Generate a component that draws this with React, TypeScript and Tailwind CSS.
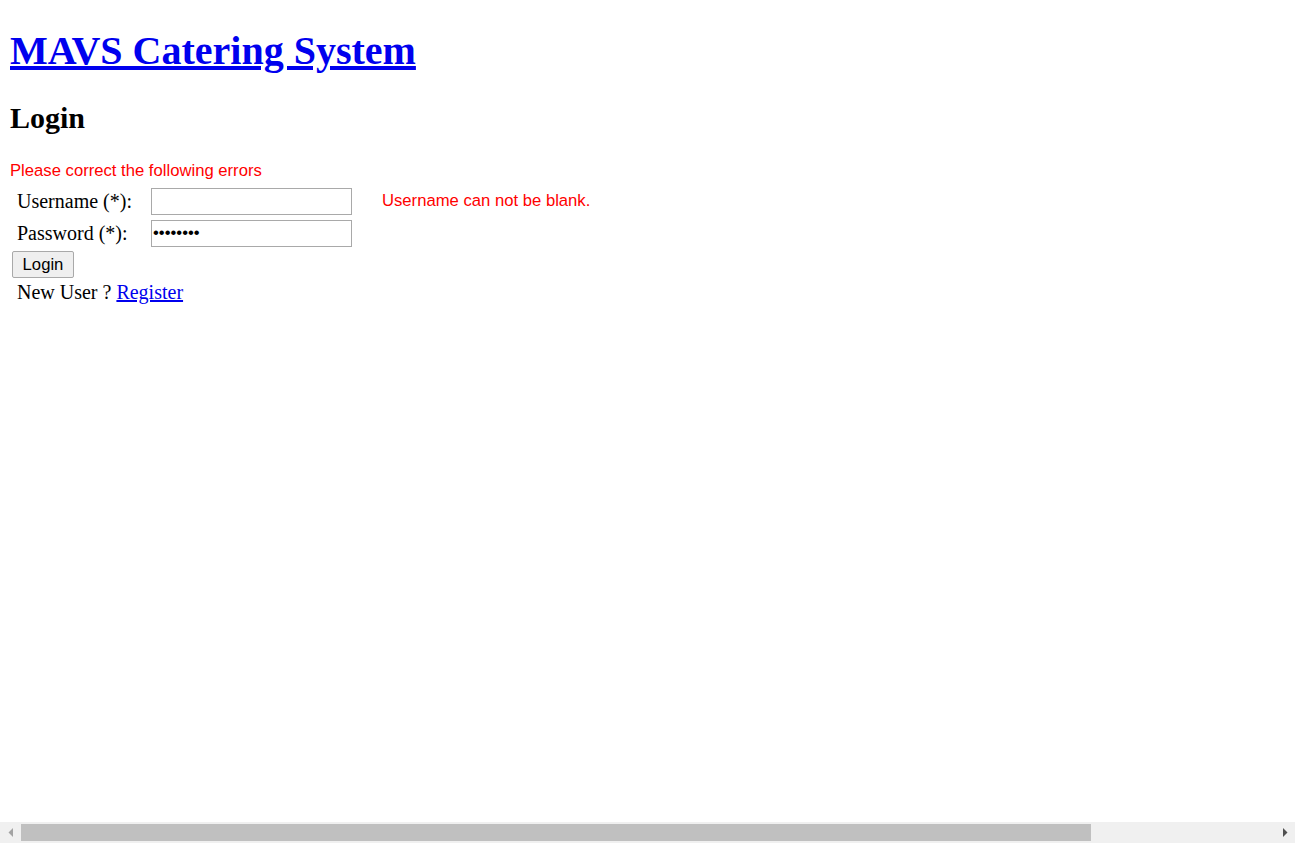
import React from "react";

export default function App() {
  const serif = { fontFamily: '"Liberation Serif", "Times New Roman", serif' };
  return (
    <div className="flex h-screen w-full flex-col overflow-hidden bg-white">
      <div className="flex-1 overflow-hidden pl-[10px]">
        <h1
          className="mt-[28px] text-[40px] font-bold leading-[46px]"
          style={serif}
        >
          <a href="#" className="text-[#0000ee] underline">
            MAVS Catering System
          </a>
        </h1>
        <h2
          className="mt-[27px] text-[30px] font-bold leading-[34px] text-black"
          style={serif}
        >
          Login
        </h2>
        <div className="mt-[26px] font-['Liberation_Sans',Arial,sans-serif] text-[16.67px] leading-[19px] text-[#ff0000]">
          Please correct the following errors
        </div>

        <div className="mt-[8px] flex h-[27px] items-start">
          <div
            className="w-[141px] pl-[7px] text-[20px] leading-[27px] text-black"
            style={serif}
          >
            Username (*):
          </div>
          <input
            type="text"
            readOnly
            className="h-[27px] w-[201px] border border-[#a9a9a9] bg-white outline-none"
          />
          <div className="ml-[30px] font-['Liberation_Sans',Arial,sans-serif] text-[16.67px] leading-[25px] text-[#ff0000]">
            Username can not be blank.
          </div>
        </div>

        <div className="mt-[5px] flex h-[27px] items-start">
          <div
            className="w-[141px] pl-[7px] text-[20px] leading-[27px] text-black"
            style={serif}
          >
            Password (*):
          </div>
          <div className="flex h-[27px] w-[201px] items-center border border-[#a9a9a9] bg-white pl-[1px] font-['Liberation_Sans',Arial,sans-serif] text-[16.67px] leading-none text-black">
            ••••••••
          </div>
        </div>

        <div className="mt-[4px] pl-[2px]">
          <button
            type="button"
            className="flex h-[27px] w-[62px] items-center justify-center rounded-[2px] border border-[#a9a9a9] bg-[#efefef] pt-[1px] font-['Liberation_Sans',Arial,sans-serif] text-[16.67px] leading-none text-black"
          >
            Login
          </button>
        </div>

        <div
          className="mt-[3px] pl-[7px] text-[20px] leading-[23px] text-black"
          style={serif}
        >
          New User ?{" "}
          <a href="#" className="text-[#0000ee] underline">
            Register
          </a>
        </div>
      </div>

      <div className="flex h-[21px] shrink-0 items-center bg-[#f0f0f0]">
        <div className="flex h-full w-[21px] items-center justify-center">
          <svg width="6" height="9" viewBox="0 0 6 9">
            <path d="M5 0 L0.5 4.5 L5 9 Z" fill="#a3a3a3" />
          </svg>
        </div>
        <div className="h-[17px] w-[1070px] bg-[#c0c0c0]" />
        <div className="flex-1" />
        <div className="flex h-full w-[21px] items-center justify-center">
          <svg width="6" height="9" viewBox="0 0 6 9">
            <path d="M1 0 L5.5 4.5 L1 9 Z" fill="#505050" />
          </svg>
        </div>
      </div>
    </div>
  );
}
